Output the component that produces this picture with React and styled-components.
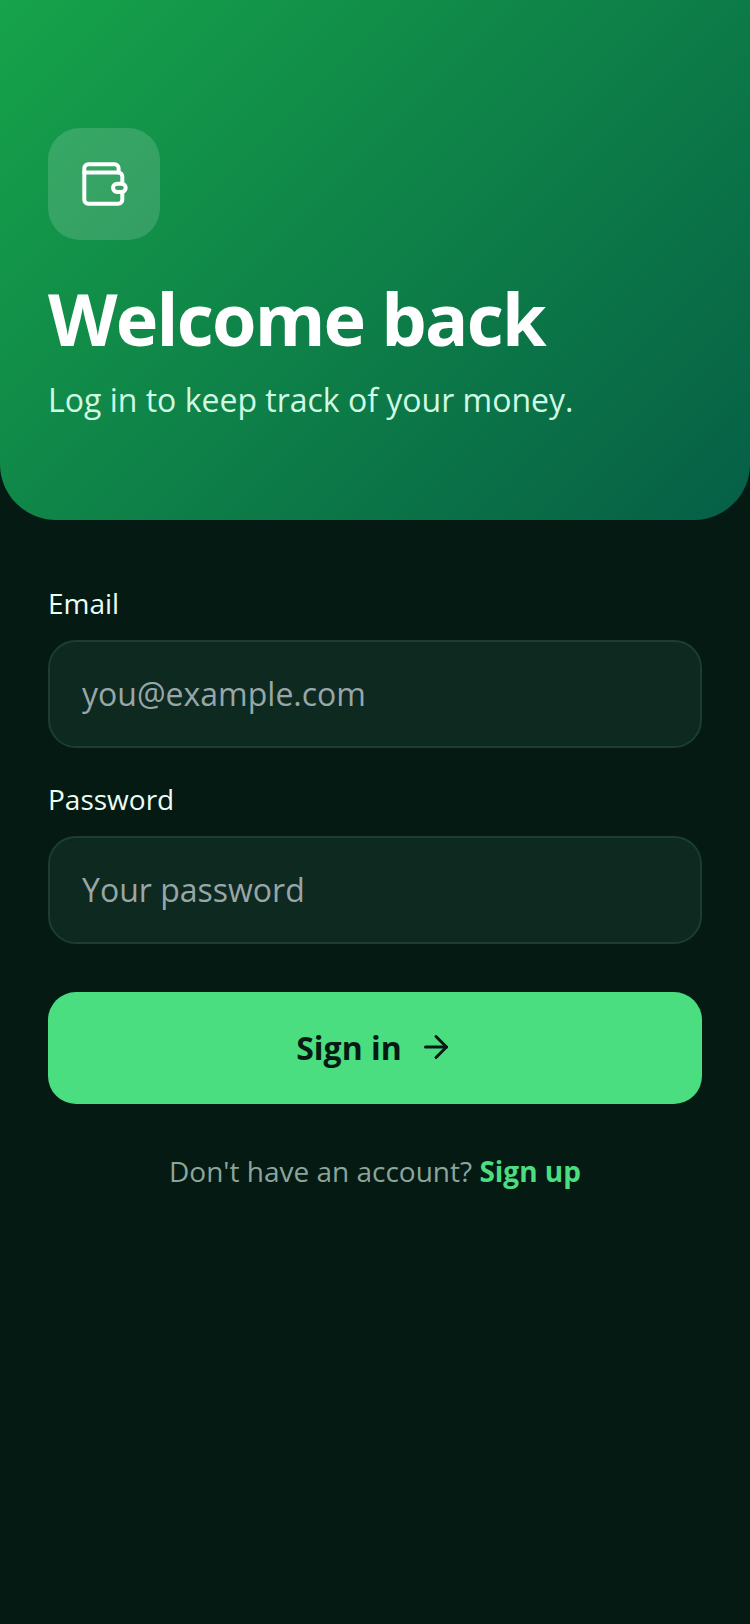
import React from 'react';
import styled, { createGlobalStyle } from 'styled-components';

const GlobalStyle = createGlobalStyle`
    html, body {
        margin: 0;
        padding: 0;
        background-color: #051a13;
    }
    * {
        box-sizing: border-box;
    }
`;

const Page = styled.div`
    width: 750px;
    height: 1624px;
    overflow: hidden;
    background-color: #051a13;
    font-family: "Open Sans", sans-serif;
`;

const Hero = styled.header`
    height: 520px;
    padding: 128px 48px 0;
    background: linear-gradient(135deg, #16a34a 0%, #065f46 100%);
    border-radius: 0 0 56px 56px;
`;

const IconBox = styled.div`
    width: 112px;
    height: 112px;
    display: flex;
    align-items: center;
    justify-content: center;
    background-color: rgba(255, 255, 255, 0.15);
    border-radius: 32px;
`;

const Title = styled.h1`
    margin: 34px 0 0;
    font-size: 72px;
    line-height: 88px;
    font-weight: 700;
    letter-spacing: -1.8px;
    color: #ffffff;
`;

const Subtitle = styled.p`
    margin: 16px 0 0;
    font-size: 32px;
    line-height: 44px;
    color: #d1fae5;
`;

const Form = styled.form`
    display: flex;
    flex-direction: column;
    padding: 63px 48px 0;
`;

const Field = styled.div`
    display: flex;
    flex-direction: column;
    gap: 17px;
    margin-bottom: 31px;
`;

const Label = styled.label`
    font-size: 28px;
    line-height: 40px;
    color: #ecfdf5;
`;

const Input = styled.input`
    width: 100%;
    height: 108px;
    padding: 0 32px 2px;
    font-family: inherit;
    font-size: 32px;
    color: #ecfdf5;
    background-color: #0d2920;
    border: 2px solid #1c3d32;
    border-radius: 28px;
    outline: none;

    &::placeholder {
        color: #98a6a8;
        opacity: 1;
    }
`;

const SubmitButton = styled.button`
    height: 112px;
    margin-top: 17px;
    padding: 0 0 2px;
    display: flex;
    align-items: center;
    justify-content: center;
    gap: 16px;
    font-family: inherit;
    font-size: 32px;
    font-weight: 700;
    color: #051a13;
    background-color: #4ade80;
    border: none;
    border-radius: 28px;
`;

const Footer = styled.p`
    margin: 47px 0 0;
    text-align: center;
    font-size: 28px;
    line-height: 40px;
    color: #8aa69c;
`;

const FooterLink = styled.a`
    font-weight: 700;
    color: #4ade80;
`;

const WalletIcon = () => (
    <svg width="48" height="48" viewBox="0 0 24 24" fill="none" stroke="#fff" strokeWidth="2" strokeLinecap="round" strokeLinejoin="round">
        <path d="M19.3 6.2V4.15a2 2 0 0 0-2-2H4.15a2 2 0 0 0-2 2v15.7a2 2 0 0 0 2 2h15a2 2 0 0 0 2-2V16" />
        <path d="M2.15 6.2h17a2 2 0 0 1 2 2v3.65" />
        <rect x="16.5" y="11.85" width="6.35" height="4.15" rx="2.07" />
    </svg>
);

const ArrowIcon = () => (
    <svg width="36" height="36" viewBox="0 0 24 24" fill="none" stroke="#051a13" strokeWidth="2" strokeLinecap="round" strokeLinejoin="round">
        <path d="M5 12h14" />
        <path d="m12 5 7 7-7 7" />
    </svg>
);

const App = () => {
    return (
        <Page>
            <GlobalStyle />
            <Hero>
                <IconBox>
                    <WalletIcon />
                </IconBox>
                <Title>Welcome back</Title>
                <Subtitle>Log in to keep track of your money.</Subtitle>
            </Hero>
            <Form>
                <Field>
                    <Label>Email</Label>
                    <Input type="email" placeholder="you@example.com" />
                </Field>
                <Field>
                    <Label>Password</Label>
                    <Input type="password" placeholder="Your password" />
                </Field>
                <SubmitButton type="button">
                    Sign in
                    <ArrowIcon />
                </SubmitButton>
                <Footer>
                    Don't have an account? <FooterLink>Sign up</FooterLink>
                </Footer>
            </Form>
        </Page>
    );
};

export default App;
